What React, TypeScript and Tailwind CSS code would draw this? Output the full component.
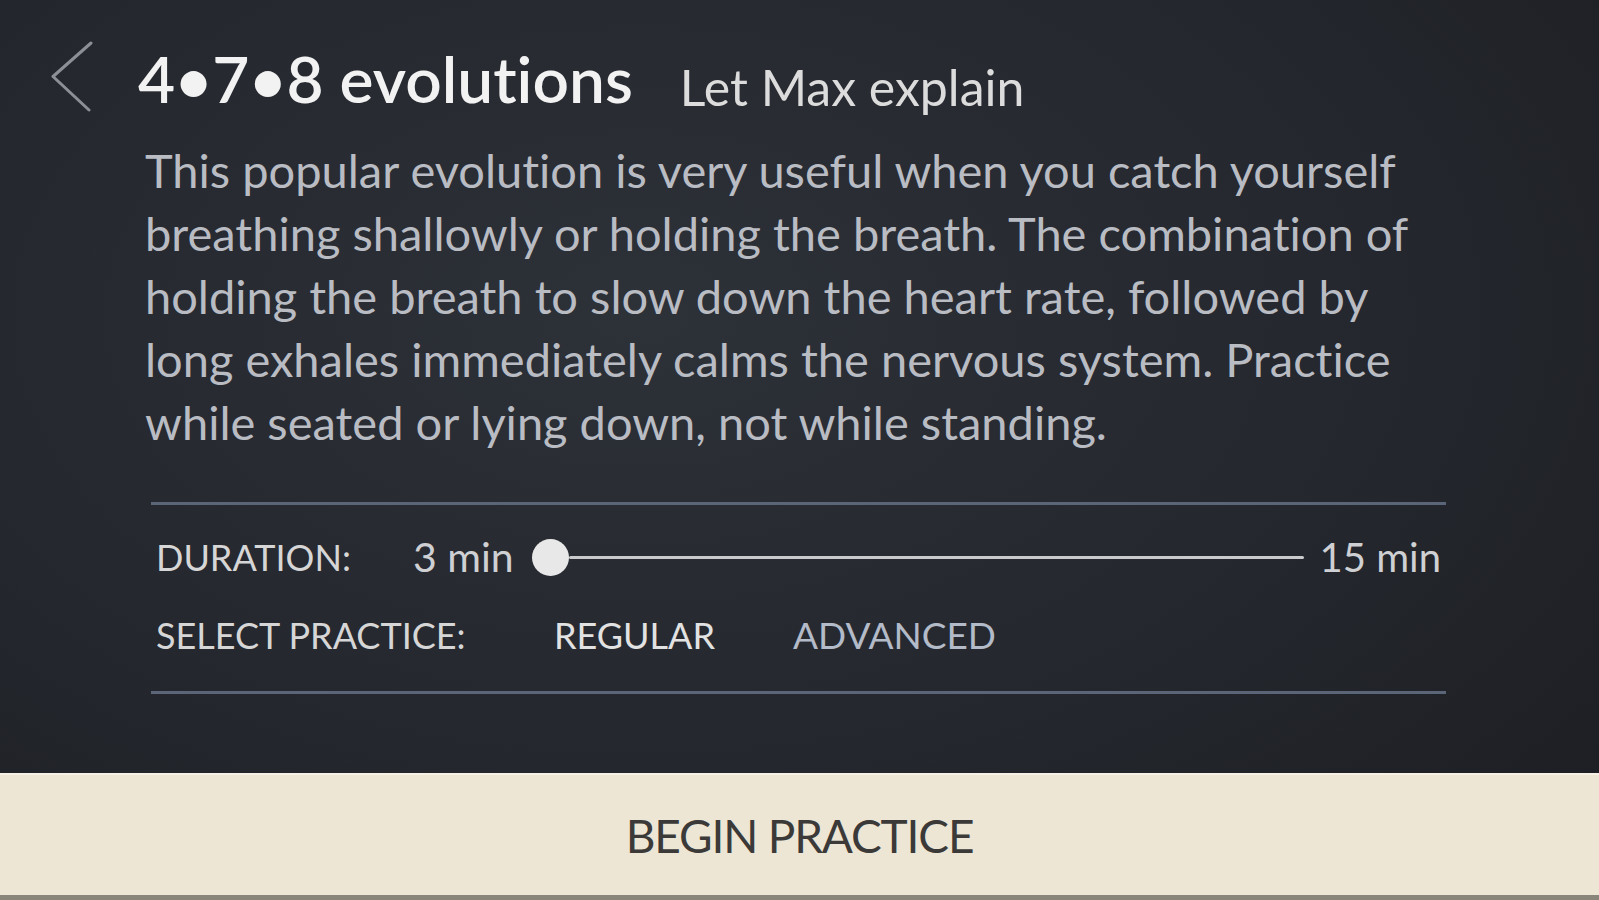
const lines = [
  "This popular evolution is very useful when you catch yourself",
  "breathing shallowly or holding the breath. The combination of",
  "holding the breath to slow down the heart rate, followed by",
  "long exhales immediately calms the nervous system. Practice",
  "while seated or lying down, not while standing.",
];

const BackArrow = () => (
  <svg width="44" height="72" viewBox="0 0 44 72" fill="none">
    <path
      d="M41 2 L3 35.5 L39 69"
      stroke="#8c9096"
      strokeWidth="3"
      strokeLinecap="round"
      strokeLinejoin="round"
    />
  </svg>
);

const App = () => {
  return (
    <div className="w-full h-[900px] flex flex-col overflow-hidden font-['Lato',sans-serif] [font-variant-ligatures:none] bg-[radial-gradient(ellipse_at_40%_35%,#2d3138_0%,#24272d_55%,#1b1d22_100%)]">
      <div className="flex-1 flex flex-col">
        <div className="flex items-start pt-[41px] pl-[50px]">
          <BackArrow />
          <h1 className="ml-[44px] mt-[2px] text-[64px] leading-[72px] font-semibold text-[#f2f2f2]">
            4•7•8 evolutions
          </h1>
          <span className="ml-[47px] mt-[18px] text-[50px] leading-[56px] text-[#dcdcdc]">
            Let Max explain
          </span>
        </div>

        <div className="ml-[145px] mt-[24px] text-[47px] leading-[63px] text-[#b9bcc3]">
          {lines.map((l) => (
            <p key={l} className="whitespace-nowrap">
              {l}
            </p>
          ))}
        </div>

        <div className="ml-[151px] w-[1295px] mt-[48px] border-t-[3px] border-b-[3px] border-[#5a6578] pt-[24px] pb-[28px] text-[36px] text-[#d6d6d6]">
          <div className="flex items-center pl-[5px] pr-[5px] h-[56px]">
            <span className="w-[257px] shrink-0">DURATION:</span>
            <span className="text-[41px] text-[#cfd0d3]">3 min</span>
            <span className="ml-[18px] w-[37px] h-[37px] rounded-full bg-[#e8e8e8] shrink-0" />
            <span className="flex-1 h-[3px] bg-[#c9cacc] rounded-full" />
            <span className="ml-[16px] text-[40px] text-[#cfd0d3]">15 min</span>
          </div>
          <div className="flex items-center pl-[5px] h-[56px] mt-[22px]">
            <span className="w-[398px] shrink-0">SELECT PRACTICE:</span>
            <span className="text-[#e2e2e2]">REGULAR</span>
            <span className="ml-[78px] text-[37px] text-[#b3bac8]">ADVANCED</span>
          </div>
        </div>
      </div>

      <button className="h-[127px] shrink-0 w-full bg-[#ede6d5] border-t-2 border-[#f6f1e4] border-b-[5px] border-b-[#8a857b] flex items-center justify-center">
        <span className="text-[46px] text-[#3b3a38] tracking-tight">BEGIN PRACTICE</span>
      </button>
    </div>
  );
};

export default App;
